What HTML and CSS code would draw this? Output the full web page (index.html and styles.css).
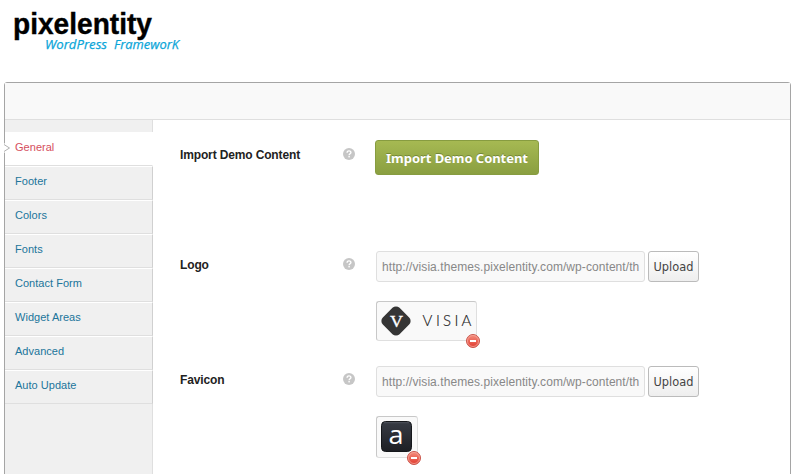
FILE: index.html
```html
<!DOCTYPE html>
<html lang="en">
<head>
<meta charset="utf-8">
<title>Theme Options</title>
<link rel="stylesheet" href="styles.css">
</head>
<body>
<svg width="0" height="0" class="defs">
  <defs>
    <linearGradient id="red" x1="0" y1="0" x2="0" y2="1"><stop offset="0" stop-color="#f59080"/><stop offset="1" stop-color="#e0382c"/></linearGradient>
    <linearGradient id="dark" x1="0" y1="0" x2="0" y2="1"><stop offset="0" stop-color="#373b44"/><stop offset="1" stop-color="#1d1f24"/></linearGradient>
    <symbol id="help" viewBox="0 0 12 12"><circle cx="6" cy="6" r="6" fill="#c6c6c6"/><path d="M4.1 4.7C4.1 2.3 7.9 2.3 7.9 4.5C7.9 5.8 6.1 5.8 6.1 7.2" fill="none" stroke="#fff" stroke-width="1.4"/><rect x="5.4" y="8" width="1.4" height="1.4" fill="#fff"/></symbol>
    <symbol id="remove" viewBox="0 0 14 14"><circle cx="7" cy="7" r="6.5" fill="url(#red)" stroke="#c8564c"/><circle cx="7" cy="7" r="5.5" fill="none" stroke="#f6a79b" stroke-width=".8"/><rect x="4" y="6" width="6" height="2" fill="#fff"/></symbol>
  </defs>
</svg>
<header class="brand">
  <svg width="200" height="60">
    <text class="brand-name" x="13" y="34" textLength="139" lengthAdjust="spacingAndGlyphs">pixelentity</text>
    <g class="brand-sub">
      <text x="45" y="49" textLength="62" lengthAdjust="spacingAndGlyphs">WordPress</text>
      <text x="114" y="49" textLength="65" lengthAdjust="spacingAndGlyphs">FrameworK</text>
    </g>
  </svg>
</header>
<main class="panel">
  <div class="panel-head"></div>
  <div class="panel-body">
    <nav class="menu">
      <a class="active">General<svg class="arrow" width="7" height="10"><path d="M0 0V10L6 5Z" fill="#fff"/><path d="M0 1.5L5.5 5L0 8.5" fill="none" stroke="#b0b0b0"/></svg></a>
      <a>Footer</a>
      <a>Colors</a>
      <a>Fonts</a>
      <a>Contact Form</a>
      <a>Widget Areas</a>
      <a>Advanced</a>
      <a>Auto Update</a>
    </nav>
    <div class="content">
      <section class="row row-import">
        <div class="label">Import Demo Content</div>
        <svg class="help" width="12" height="12"><use href="#help"/></svg>
        <button class="primary">Import Demo Content</button>
      </section>
      <section class="row row-field">
        <div class="label">Logo</div>
        <svg class="help" width="12" height="12"><use href="#help"/></svg>
        <div class="field">
          <div class="controls"><div class="input">http://visia.themes.pixelentity.com/wp-content/th</div><button class="upload">Upload</button></div>
          <div class="preview preview-logo">
            <svg width="99" height="38">
              <rect x="7.2" y="7.2" width="23.6" height="23.6" rx="5" fill="#353535" transform="rotate(45 19 19)"/>
              <text class="mark" x="13" y="24.8" textLength="13" lengthAdjust="spacingAndGlyphs">V</text>
              <text class="word" y="24" x="45.5 59 66 77.5 84.5">VISIA</text>
            </svg>
            <svg class="remove" width="14" height="14"><use href="#remove"/></svg>
          </div>
        </div>
      </section>
      <section class="row row-field">
        <div class="label">Favicon</div>
        <svg class="help" width="12" height="12"><use href="#help"/></svg>
        <div class="field">
          <div class="controls"><div class="input">http://visia.themes.pixelentity.com/wp-content/th</div><button class="upload">Upload</button></div>
          <div class="preview preview-icon">
            <svg width="40" height="40">
              <rect x="4.5" y="4.5" width="30" height="30" rx="4" fill="url(#dark)" stroke="#15171b"/>
              <path d="M7 5.7H32" stroke="#4d515a"/>
              <text class="letter" x="11.5" y="27" textLength="15" lengthAdjust="spacingAndGlyphs">a</text>
            </svg>
            <svg class="remove" width="14" height="14"><use href="#remove"/></svg>
          </div>
        </div>
      </section>
    </div>
  </div>
</main>
</body>
</html>
```

FILE: styles.css
```css
* { box-sizing: border-box; }
body {
  margin: 0;
  height: 474px;
  overflow: hidden;
  background: #fff;
  font: 12px "Liberation Sans", Arial, sans-serif;
}
svg { display: block; }
.defs { position: absolute; }
.brand { height: 82px; }
.brand-name { font-size: 30px; font-weight: bold; fill: #000; stroke: #000; stroke-width: .4px; }
.brand-sub { font: italic 13.5px "Open Sans", sans-serif; fill: #0aa5d8; stroke: #0aa5d8; stroke-width: .25px; }
.panel {
  width: 787px;
  height: 400px;
  margin-left: 4px;
  border: 1px solid #a5a5a5;
  border-radius: 3px;
}
.panel-head {
  height: 37px;
  background: #f9f9f9;
  border-bottom: 1px solid #dfdfdf;
}
.panel-body { display: flex; height: 361px; }
.menu {
  width: 148px;
  padding-top: 12px;
  background: #f0f0f0;
  border-right: 1px solid #dfdfdf;
}
.menu a {
  position: relative;
  display: block;
  height: 34px;
  padding: 7px 10px 0;
  font-size: 11px;
  line-height: 15px;
  letter-spacing: .03px;
  color: #21759b;
  border-top: 1px solid #fff;
  border-bottom: 1px solid #dfdfdf;
  margin-right: -1px;
  border-right: 1px solid #d0d0d0;
}
.menu .active { background: #fff; color: #d54e5d; border-right-color: #fff; }
.arrow { position: absolute; left: -1px; top: 10px; }
.content { flex: 1; padding: 20px 0 0 27px; }
.row { display: flex; align-items: flex-start; }
.row-import { height: 111px; }
.row-field { height: 115px; }
.label { width: 163px; padding-top: 8px; font-weight: bold; line-height: 15px; letter-spacing: -.14px; color: #222; }
.help { margin-top: 8px; }
.row-field .help { margin-top: 7px; }
.row-field .label { padding-top: 7px; }
.primary {
  width: 164px;
  height: 35px;
  margin-left: 20px;
  padding: 0;
  white-space: nowrap;
  font: bold 13px "Noto Sans", sans-serif;
  letter-spacing: -.05px;
  color: #fff;
  text-shadow: 0 -1px 0 #748837;
  background: linear-gradient(#a6b952, #8a9f41);
  border: 1px solid #879c40;
  border-radius: 3px;
}
.field { margin-left: 21px; }
.controls { display: flex; gap: 3px; }
.input {
  width: 269px;
  height: 31px;
  padding: 0 4px 0 5px;
  line-height: 30px;
  white-space: nowrap;
  overflow: hidden;
  letter-spacing: .07px;
  color: #888;
  background: #f9f9f9;
  border: 1px solid #dfdfdf;
  border-radius: 3px;
}
.upload {
  width: 51px;
  height: 31px;
  padding: 1px 0 0;
  font: 11.4px "DejaVu Sans", sans-serif;
  color: #444;
  background: linear-gradient(#fff, #eee);
  border: 1px solid #bbb;
  border-radius: 3px;
}
.preview {
  position: relative;
  margin-top: 19px;
  background: #f9f9f9;
  border: 1px solid #dfdfdf;
  border-top-color: #c8c8c8;
  border-left-color: #c8c8c8;
  border-radius: 3px;
}
.preview-logo { width: 101px; height: 40px; }
.preview-icon { width: 42px; height: 42px; }
.remove { position: absolute; right: -4px; bottom: -8px; }
.mark { font: 17px "Liberation Serif", serif; fill: #fff; stroke: #fff; stroke-width: .3px; }
.word { font: 300 15px Lato, sans-serif; fill: #222; stroke: #222; stroke-width: .15px; }
.letter { font: 25px "Open Sans", sans-serif; fill: #fff; }
```
